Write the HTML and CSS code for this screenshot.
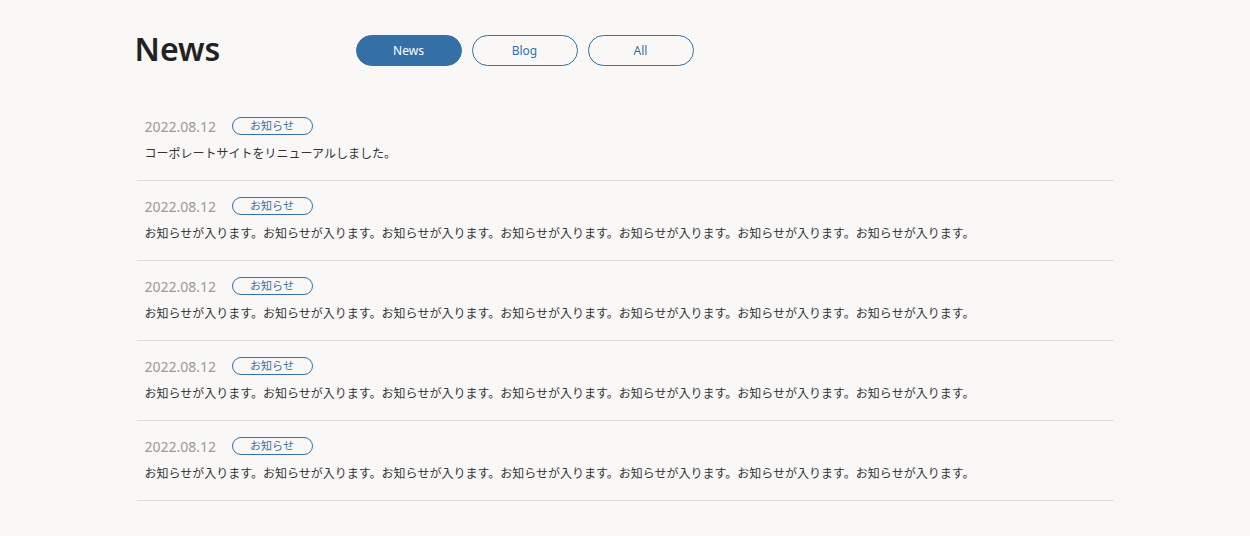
FILE: index.html
```html
<!DOCTYPE html>
<html lang="ja">
<head>
  <meta charset="UTF-8">
  <title>News</title>
  <link rel="stylesheet" href="styles.css">
</head>
<body>
  <div class="news">
    <div class="news-head">
      <h1>News</h1>
      <div class="tabs">
        <button class="tab active">News</button>
        <button class="tab">Blog</button>
        <button class="tab">All</button>
      </div>
    </div>

    <ul class="news-list">
      <li class="item">
        <div class="meta"><span class="date">2022.08.12</span><span class="tag">お知らせ</span></div>
        <p class="text">コーポレートサイトをリニューアルしました。</p>
      </li>
      <li class="item">
        <div class="meta"><span class="date">2022.08.12</span><span class="tag">お知らせ</span></div>
        <p class="text">お知らせが入ります。お知らせが入ります。お知らせが入ります。お知らせが入ります。お知らせが入ります。お知らせが入ります。お知らせが入ります。</p>
      </li>
      <li class="item">
        <div class="meta"><span class="date">2022.08.12</span><span class="tag">お知らせ</span></div>
        <p class="text">お知らせが入ります。お知らせが入ります。お知らせが入ります。お知らせが入ります。お知らせが入ります。お知らせが入ります。お知らせが入ります。</p>
      </li>
      <li class="item">
        <div class="meta"><span class="date">2022.08.12</span><span class="tag">お知らせ</span></div>
        <p class="text">お知らせが入ります。お知らせが入ります。お知らせが入ります。お知らせが入ります。お知らせが入ります。お知らせが入ります。お知らせが入ります。</p>
      </li>
      <li class="item">
        <div class="meta"><span class="date">2022.08.12</span><span class="tag">お知らせ</span></div>
        <p class="text">お知らせが入ります。お知らせが入ります。お知らせが入ります。お知らせが入ります。お知らせが入ります。お知らせが入ります。お知らせが入ります。</p>
      </li>
    </ul>
  </div>
</body>
</html>
```

FILE: styles.css
```css
body {
  margin: 0;
  background: #f9f8f6;
  font-family: "Noto Sans", "Noto Sans CJK JP", sans-serif;
  color: #333;
}
.news {
  width: 977px;
  margin: 0 auto;
  padding-top: 30px;
}
.news-head {
  display: flex;
  align-items: center;
}
.news-head h1 {
  width: 221px;
  margin: 0 0 0 -2px;
  font-size: 32px;
  font-weight: 600;
  line-height: 38px;
  color: #222;
}
.tabs {
  display: flex;
  gap: 10px;
  margin-top: 3px;
}
.tab {
  width: 106px;
  height: 31px;
  border: 1px solid #3470a6;
  border-radius: 16px;
  background: transparent;
  color: #3470a6;
  font-family: "Noto Sans", sans-serif;
  font-size: 12px;
  cursor: pointer;
}
.tab.active {
  background: #3470a6;
  color: #fff;
}
.news-list {
  list-style: none;
  margin: 33px 0 0;
  padding: 0;
}
.item {
  padding: 16px 8px 16px;
  border-bottom: 1px solid #ddd;
}
.meta {
  display: flex;
  align-items: center;
  height: 18px;
}
.date {
  width: 87px;
  font-size: 14px;
  color: #999;
}
.tag {
  width: 79px;
  height: 16px;
  border: 1px solid #3470a6;
  border-radius: 9px;
  font-size: 11px;
  line-height: 16px;
  text-align: center;
  color: #3470a6;
}
.text {
  margin: 9px 0 0;
  font-size: 12px;
  line-height: 20px;
}
```
